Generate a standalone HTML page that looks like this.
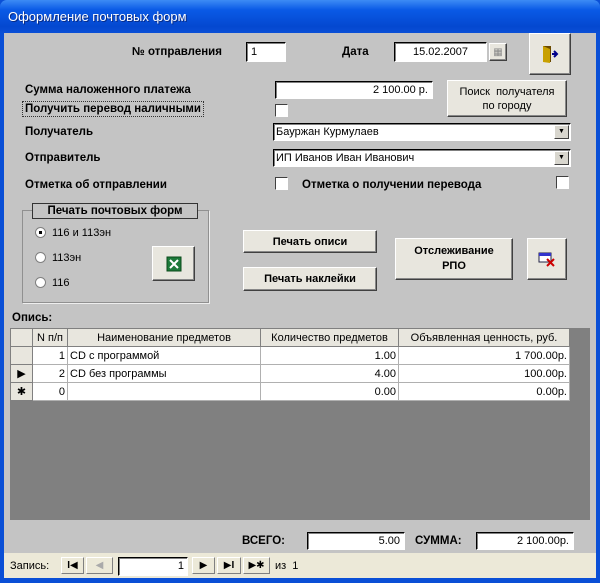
<!DOCTYPE html>
<html><head><meta charset="utf-8"><style>
*{margin:0;padding:0;box-sizing:border-box}
body{width:600px;height:583px;overflow:hidden;background:#0a4fd6;font-family:"Liberation Sans","DejaVu Sans",sans-serif;font-size:11px;color:#000;position:relative}
.a{position:absolute}
.title{left:0;top:0;width:600px;height:33px;background:linear-gradient(#3d8cf5,#0a5ae6 30%,#0448d0 80%,#0a4fd6);border-radius:7px 7px 0 0}
.title span{position:absolute;left:8px;top:9px;color:#fff;font-size:13px;text-shadow:1px 1px #0a2a80}
.client{left:4px;top:33px;width:592px;height:545px;background:#c4c4c4}
.b{font-weight:bold;font-size:11.5px}
.box{background:#fff;border:1px solid #000;border-right-color:#fff;border-bottom-color:#fff;box-shadow:inset 1px 1px #808080;font-size:11px;padding:2px 4px;white-space:nowrap}
.btn{background:#e8e6de;border:1px solid;border-color:#fff #404040 #404040 #fff;box-shadow:inset -1px -1px #888;display:flex;align-items:center;justify-content:center;text-align:center;font-size:11px}
.chk{width:13px;height:13px;background:#fff;border:1px solid #404040;border-right-color:#fff;border-bottom-color:#fff}
.rad{width:11px;height:11px;border-radius:50%;background:#fff;border:1px solid #808080}
.dd{position:absolute;right:1px;top:1px;width:15px;height:14px;background:#d8d6ce;border:1px solid;border-color:#fff #404040 #404040 #fff;font-size:7px;text-align:center;line-height:12px}
table{border-collapse:collapse;font-size:11px}
td{border:1px solid #b0b0b0;height:18px;padding:0 2px;background:#fff;white-space:nowrap}
tr.h td{background:#e8e6de;text-align:center;border-color:#808080}
td.s{background:#e8e6de;border-color:#808080;text-align:center}
.r{text-align:right}
.nav{left:4px;top:553px;width:592px;height:25px;background:#ece9d8}
.nb{position:absolute;top:4px;height:17px;background:#ece9d8;border:1px solid;border-color:#fff #808080 #808080 #fff;font-size:10px;font-weight:bold;text-align:center;line-height:15px}
</style></head><body>
<div class="a title"><span>Оформление почтовых форм</span></div>
<div class="a client"></div>

<div class="a b" style="left:132px;top:46px">№ отправления</div>
<div class="a box" style="left:246px;top:42px;width:40px;height:20px;padding-top:3px">1</div>
<div class="a b" style="left:342px;top:46px">Дата</div>
<div class="a box" style="left:394px;top:42px;width:93px;height:20px;text-align:center;padding-top:3px">15.02.2007</div>
<div class="a btn" style="left:489px;top:43px;width:18px;height:18px;color:#888;font-size:10px">▦</div>
<div class="a btn" style="left:529px;top:33px;width:42px;height:42px"><svg width="18" height="20"><rect x="2" y="2" width="8" height="16" fill="#6b4a00"/><polygon points="2,2 9,5 9,19 2,18" fill="#c8a000"/><path d="M11 10h5M13 7l3 3-3 3" stroke="#00008b" stroke-width="2" fill="none"/></svg></div>

<div class="a b" style="left:25px;top:84px">Сумма наложенного платежа</div>
<div class="a box" style="left:275px;top:81px;width:158px;height:18px;text-align:right">2 100.00 р.</div>
<div class="a btn" style="left:447px;top:80px;width:120px;height:37px;line-height:14px">Поиск &nbsp;получателя<br>по городу</div>
<div class="a b" style="left:22px;top:101px;border:1px dotted #333;padding:1px 2px">Получить перевод наличными</div>
<div class="a chk" style="left:275px;top:104px"></div>
<div class="a b" style="left:25px;top:126px">Получатель</div>
<div class="a box" style="left:273px;top:123px;width:298px;height:18px;padding-left:2px">Бауржан Курмулаев<div class="dd">▼</div></div>
<div class="a b" style="left:25px;top:152px">Отправитель</div>
<div class="a box" style="left:273px;top:149px;width:298px;height:18px;padding-left:2px">ИП Иванов Иван Иванович<div class="dd">▼</div></div>
<div class="a b" style="left:25px;top:179px">Отметка об отправлении</div>
<div class="a chk" style="left:275px;top:177px"></div>
<div class="a b" style="left:302px;top:179px">Отметка о получении перевода</div>
<div class="a chk" style="left:556px;top:176px"></div>

<div class="a" style="left:22px;top:210px;width:187px;height:93px;border:1px solid #909090;box-shadow:1px 1px #eee"></div>
<div class="a b" style="left:32px;top:203px;width:166px;height:16px;background:#c4c4c4;border:1px solid #333;text-align:center;line-height:14px">Печать почтовых форм</div>
<div class="a rad" style="left:35px;top:227px"><div style="width:3px;height:3px;background:#000;margin:3px"></div></div>
<div class="a" style="left:52px;top:227px">116 и 113эн</div>
<div class="a rad" style="left:35px;top:252px"></div><div class="a" style="left:52px;top:252px">113эн</div>
<div class="a rad" style="left:35px;top:277px"></div><div class="a" style="left:52px;top:277px">116</div>
<div class="a btn" style="left:152px;top:246px;width:43px;height:35px"><svg width="16" height="16"><rect x="1" y="1" width="14" height="14" fill="#1d7a3a" stroke="#0a4a1a"/><path d="M4 4l8 8M12 4l-8 8" stroke="#fff" stroke-width="2"/></svg></div>

<div class="a btn b" style="left:243px;top:230px;width:134px;height:23px">Печать описи</div>
<div class="a btn b" style="left:243px;top:267px;width:134px;height:24px">Печать наклейки</div>
<div class="a btn b" style="left:395px;top:238px;width:118px;height:42px;line-height:15px">Отслеживание<br>РПО</div>
<div class="a btn" style="left:527px;top:238px;width:40px;height:42px"><svg width="18" height="16"><rect x="1" y="2" width="12" height="9" fill="#fff" stroke="#224"/><rect x="1" y="2" width="12" height="3" fill="#33c"/><path d="M9 8l7 7M16 8l-7 7" stroke="#c00" stroke-width="2"/></svg></div>

<div class="a b" style="left:12px;top:312px">Опись:</div>
<div class="a" style="left:10px;top:328px;width:580px;height:192px;background:#808080"></div>
<table class="a" style="left:10px;top:328px;width:560px">
<tr class="h"><td style="width:22px"></td><td style="width:35px">N п/п</td><td style="width:193px">Наименование предметов</td><td style="width:138px">Количество предметов</td><td>Объявленная ценность, руб.</td></tr>
<tr><td class="s"></td><td class="r">1</td><td>CD с программой</td><td class="r">1.00</td><td class="r">1 700.00р.</td></tr>
<tr><td class="s">▶</td><td class="r">2</td><td>CD без программы</td><td class="r">4.00</td><td class="r">100.00р.</td></tr>
<tr><td class="s">✱</td><td class="r">0</td><td></td><td class="r">0.00</td><td class="r">0.00р.</td></tr>
</table>

<div class="a b" style="left:242px;top:535px">ВСЕГО:</div>
<div class="a box" style="left:307px;top:532px;width:98px;height:18px;text-align:right">5.00</div>
<div class="a b" style="left:415px;top:535px">СУММА:</div>
<div class="a box" style="left:476px;top:532px;width:98px;height:18px;text-align:right">2 100.00р.</div>

<div class="a nav"></div>
<div class="a" style="left:10px;top:560px">Запись:</div>
<div class="nb" style="left:61px;top:557px;width:23px">I◀</div>
<div class="nb" style="left:86px;top:557px;width:27px;color:#aaa">◀</div>
<div class="a box" style="left:118px;top:557px;width:70px;height:19px;text-align:right;padding:2px 3px">1</div>
<div class="nb" style="left:192px;top:557px;width:23px">▶</div>
<div class="nb" style="left:217px;top:557px;width:24px">▶I</div>
<div class="nb" style="left:243px;top:557px;width:27px">▶✱</div>
<div class="a" style="left:275px;top:560px">из &nbsp;1</div>
</body></html>
